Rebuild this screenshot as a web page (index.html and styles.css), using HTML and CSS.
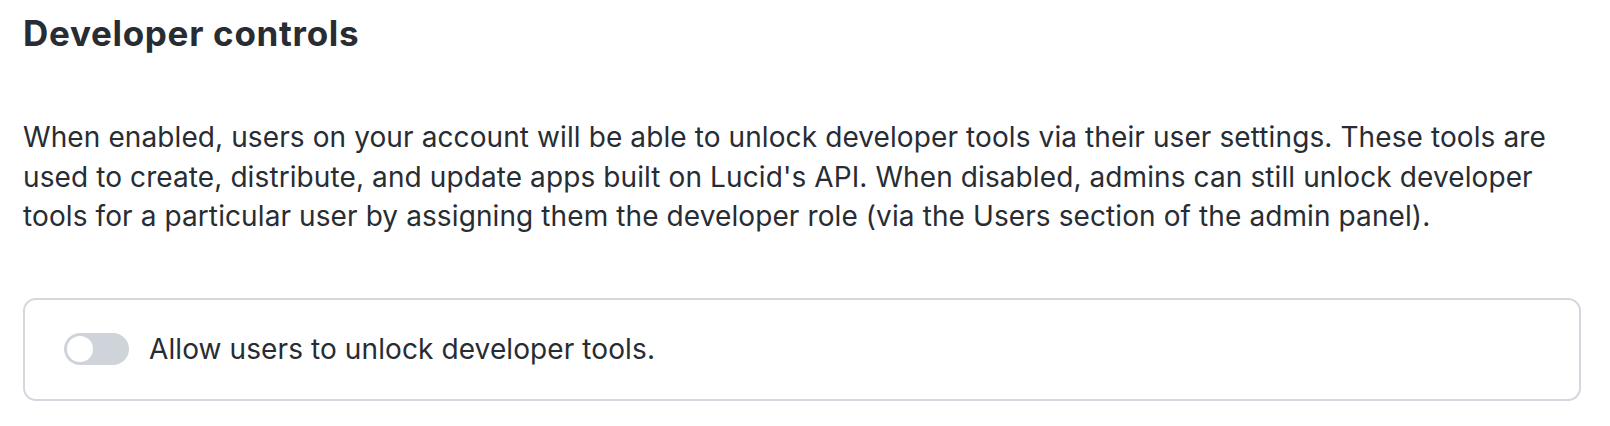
FILE: index.html
```html
<!DOCTYPE html>
<html lang="en">
<head>
<meta charset="utf-8">
<title>Developer controls</title>
<link rel="stylesheet" href="styles.css">
</head>
<body>
<main class="page">
  <h1 class="title">Developer controls</h1>
  <p class="desc">When enabled, users on your account will be able to unlock developer tools via their user settings. These tools are used to create, distribute, and update apps built on Lucid's API. When disabled, admins can still unlock developer tools for a particular user by assigning them the developer role (via the Users section of the admin panel).</p>
  <div class="card">
    <label class="toggle-row">
      <span class="toggle"><span class="knob"></span></span>
      <span class="toggle-label">Allow users to unlock developer tools.</span>
    </label>
  </div>
</main>
</body>
</html>
```

FILE: styles.css
```css
html, body {
  margin: 0;
  padding: 0;
  background: #ffffff;
}
body {
  font-family: Inter, "Noto Sans", sans-serif;
  color: #282c33;
}
.page {
  padding: 11px 29px 0 23px;
}
.title {
  margin: 0;
  font-size: 35px;
  line-height: 44px;
  font-weight: 700;
  letter-spacing: 0.7px;
}
.desc {
  margin: 63px 0 0 0;
  font-size: 28px;
  line-height: 39.5px;
  font-weight: 400;
  letter-spacing: 0.1px;
}
.card {
  margin-top: 61px;
  border: 2px solid #d3d7de;
  border-radius: 13px;
  height: 103px;
  box-sizing: border-box;
  display: flex;
  align-items: center;
  padding-left: 39px;
}
.toggle-row {
  display: flex;
  align-items: center;
  gap: 20px;
}
.toggle {
  width: 65px;
  height: 32px;
  border-radius: 16px;
  background: #cfd4db;
  display: flex;
  align-items: center;
  padding-left: 3px;
  box-sizing: border-box;
}
.knob {
  width: 26px;
  height: 26px;
  border-radius: 50%;
  background: #ffffff;
}
.toggle-label {
  font-size: 28px;
  line-height: 35px;
  letter-spacing: 0.1px;
}
```
